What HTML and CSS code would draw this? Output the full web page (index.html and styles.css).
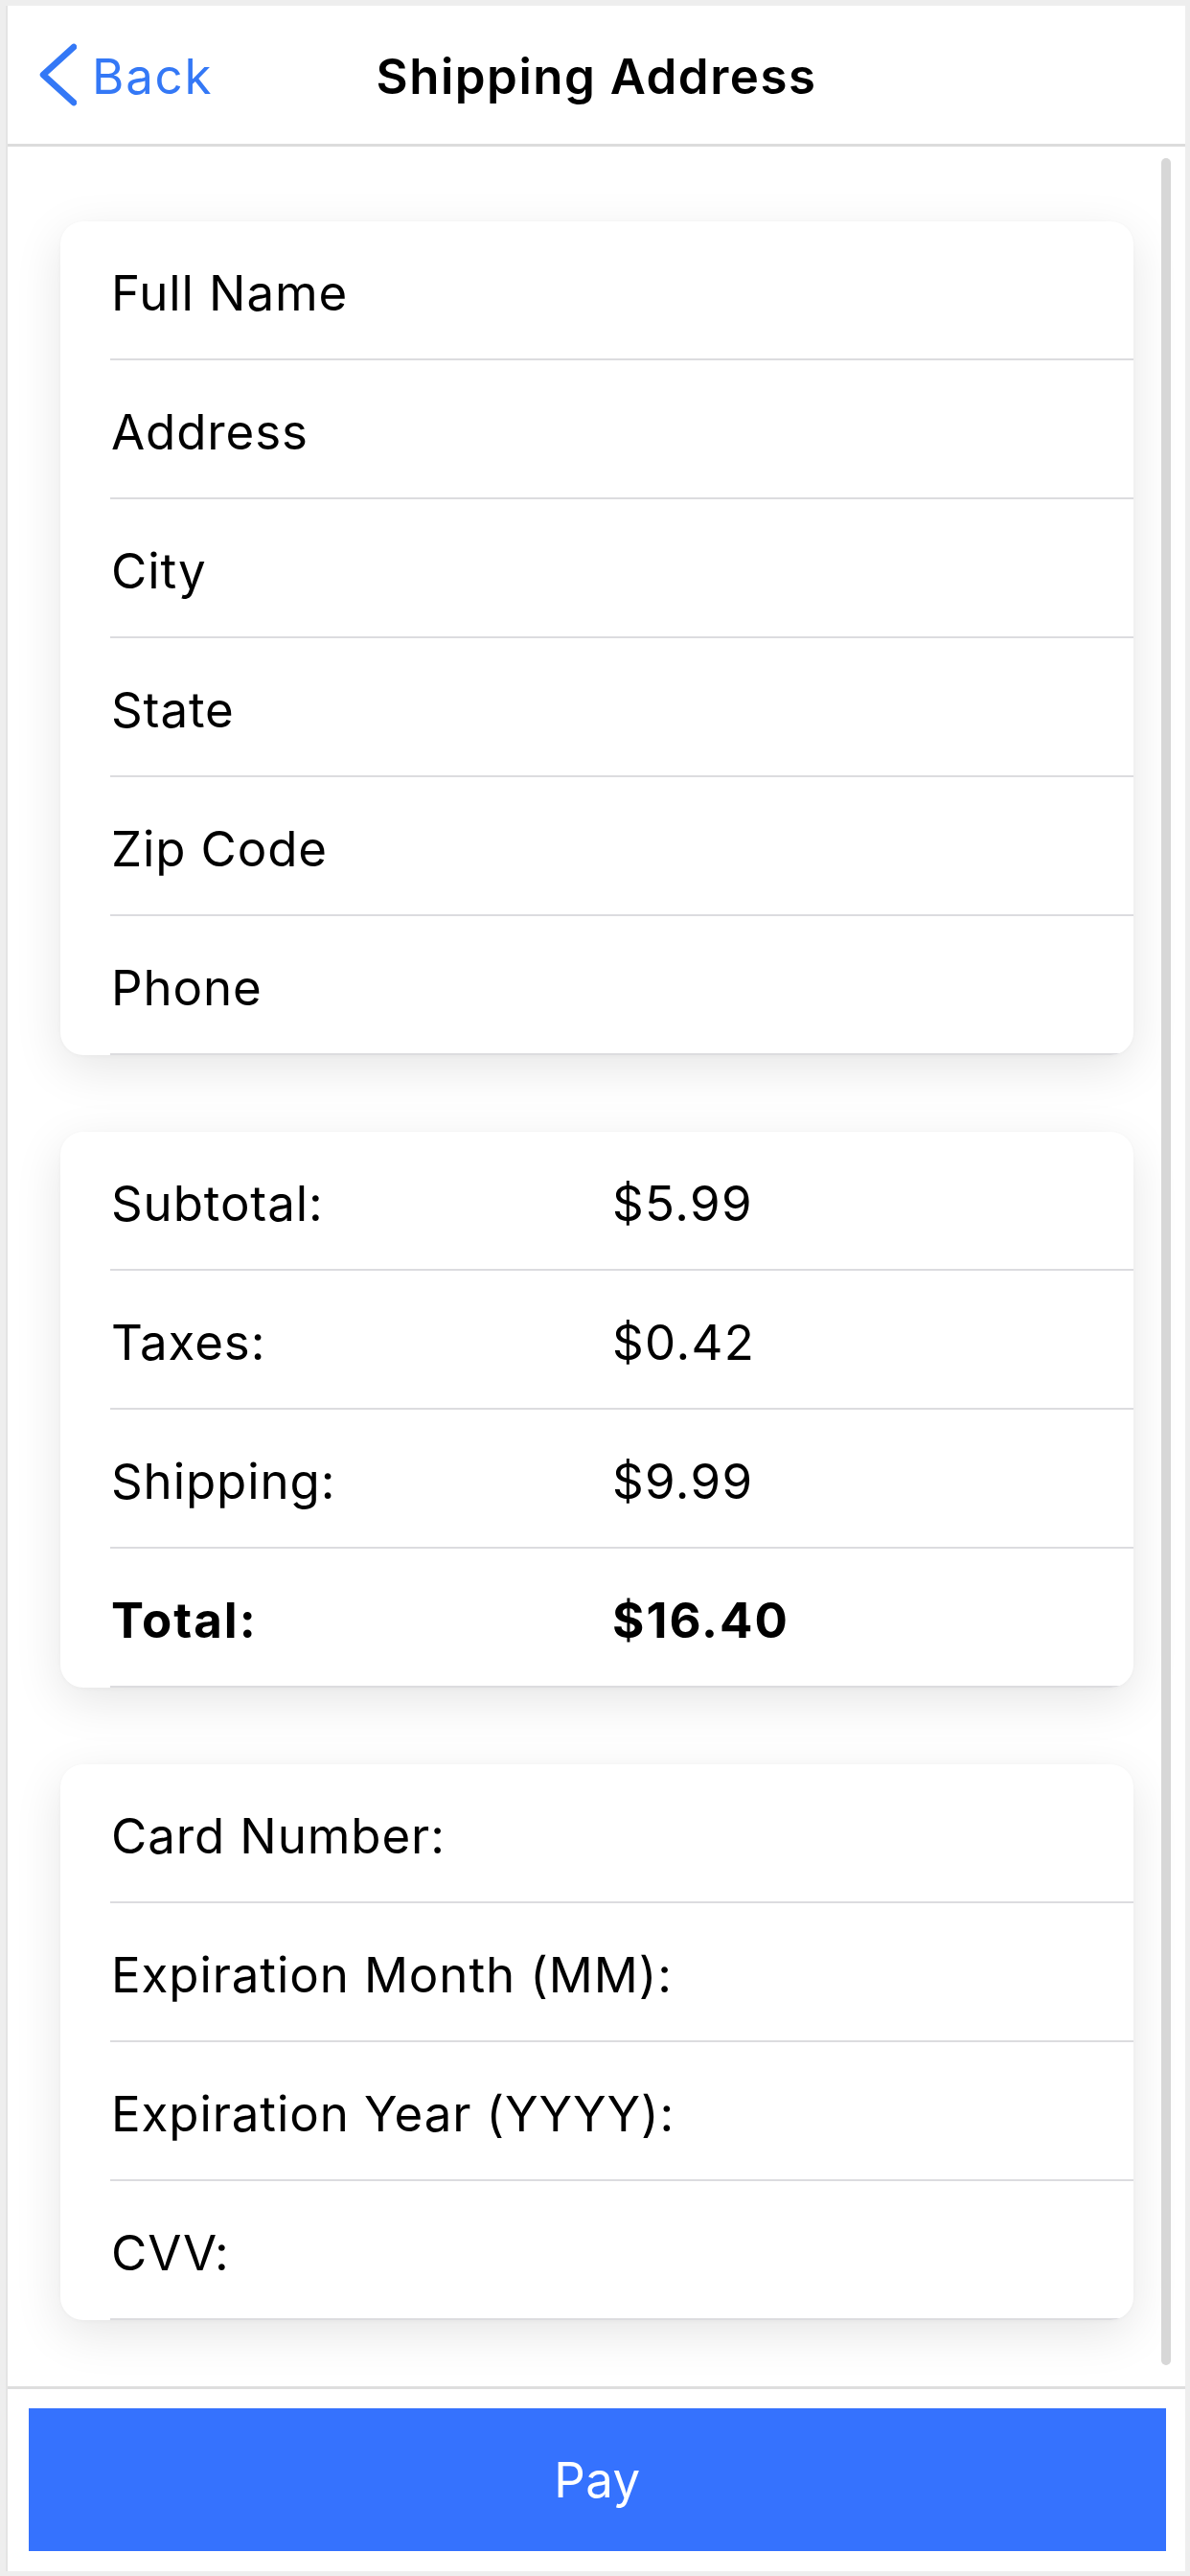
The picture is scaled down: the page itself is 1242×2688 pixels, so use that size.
FILE: index.html
```html
<!DOCTYPE html>
<html lang="en">
<head>
<meta charset="utf-8">
<title>Shipping Address</title>
<link rel="stylesheet" href="styles.css">
</head>
<body>
<div class="screen">
  <header class="nav">
    <a class="back" href="#">
      <svg class="chev" width="40" height="66" viewBox="0 0 40 66" aria-hidden="true">
        <path d="M37 4 L5 33 L37 62" fill="none" stroke="#3478f6" stroke-width="6.5" stroke-linecap="round" stroke-linejoin="round"/>
      </svg>
      <span>Back</span>
    </a>
    <h1 class="title">Shipping Address</h1>
    <span class="spacer"></span>
  </header>

  <main class="scroll">
    <section class="card">
      <div class="row"><span class="label">Full Name</span></div>
      <div class="row"><span class="label">Address</span></div>
      <div class="row"><span class="label">City</span></div>
      <div class="row"><span class="label">State</span></div>
      <div class="row"><span class="label">Zip Code</span></div>
      <div class="row"><span class="label">Phone</span></div>
    </section>

    <section class="card">
      <div class="row kv"><span class="label">Subtotal:</span><span class="value">$5.99</span></div>
      <div class="row kv"><span class="label">Taxes:</span><span class="value">$0.42</span></div>
      <div class="row kv"><span class="label">Shipping:</span><span class="value">$9.99</span></div>
      <div class="row kv total"><span class="label">Total:</span><span class="value">$16.40</span></div>
    </section>

    <section class="card">
      <div class="row"><span class="label">Card Number:</span></div>
      <div class="row"><span class="label">Expiration Month (MM):</span></div>
      <div class="row"><span class="label">Expiration Year (YYYY):</span></div>
      <div class="row"><span class="label">CVV:</span></div>
    </section>

    <div class="scrollbar"></div>
  </main>

  <footer class="footer">
    <button class="pay" type="button">Pay</button>
  </footer>
</div>
</body>
</html>
```

FILE: styles.css
```css
* { box-sizing: border-box; }

html, body {
  margin: 0;
  padding: 0;
}

body {
  background: #eeeeee;
  padding: 6px 5px 5px 8px;
  font-family: "Inter", "Noto Sans", "Liberation Sans", sans-serif;
  color: #000;
}

.screen {
  width: 1229px;
  height: 2677px;
  background: #ffffff;
  display: flex;
  flex-direction: column;
  box-shadow: -2px 0 0 #e4e4e4;
}

/* Navigation bar */
.nav {
  height: 147px;
  flex: 0 0 147px;
  border-bottom: 3px solid #dcdcdc;
  display: grid;
  grid-template-columns: 1fr auto 1fr;
  align-items: center;
  padding-top: 2px;
}

.back {
  display: flex;
  align-items: center;
  text-decoration: none;
  color: #3478f6;
  font-size: 51px;
  padding-left: 32px;
  gap: 16px;
  letter-spacing: 1.8px;
}

.chev { display: block; margin-top: -2px; }

.title {
  margin: 0;
  font-size: 51px;
  font-weight: 600;
  letter-spacing: 1.5px;
}

/* Scroll area */
.scroll {
  position: relative;
  height: 2340px;
  flex: 0 0 2340px;
  border-bottom: 3px solid #dedede;
  padding: 78px 54px 0 55px;
  display: flex;
  flex-direction: column;
  gap: 80px;
  overflow: hidden;
}

.card {
  background: #ffffff;
  border-radius: 24px;
  overflow: hidden;
  box-shadow: 0 14px 50px rgba(0, 0, 0, 0.1), 0 1px 4px rgba(0, 0, 0, 0.03);
}

.row {
  height: 145px;
  margin-left: 52px;
  padding-left: 1px;
  padding-top: 5px;
  border-bottom: 2px solid #dcdcdf;
  display: flex;
  align-items: center;
  font-size: 51px;
  letter-spacing: 0.9px;
}

.row.kv {
  display: grid;
  grid-template-columns: 523px 1fr;
  align-items: center;
}

.row.kv .value {
  letter-spacing: 1.4px;
}

.row.total {
  font-weight: 700;
}

.row.total .label,
.row.total .value {
  letter-spacing: 2px;
}

.scrollbar {
  position: absolute;
  top: 12px;
  right: 15px;
  width: 10px;
  height: 2303px;
  background: #d7d7d7;
  border-radius: 5px;
}

/* Footer */
.footer {
  flex: 1 1 auto;
  padding: 20px 20px 0 22px;
}

.pay {
  display: block;
  width: 100%;
  height: 149px;
  border: none;
  border-radius: 0;
  background: #3572fe;
  color: #ffffff;
  font-family: "Inter", "Noto Sans", "Liberation Sans", sans-serif;
  font-size: 51px;
  font-weight: 400;
  letter-spacing: 0.4px;
}
```
